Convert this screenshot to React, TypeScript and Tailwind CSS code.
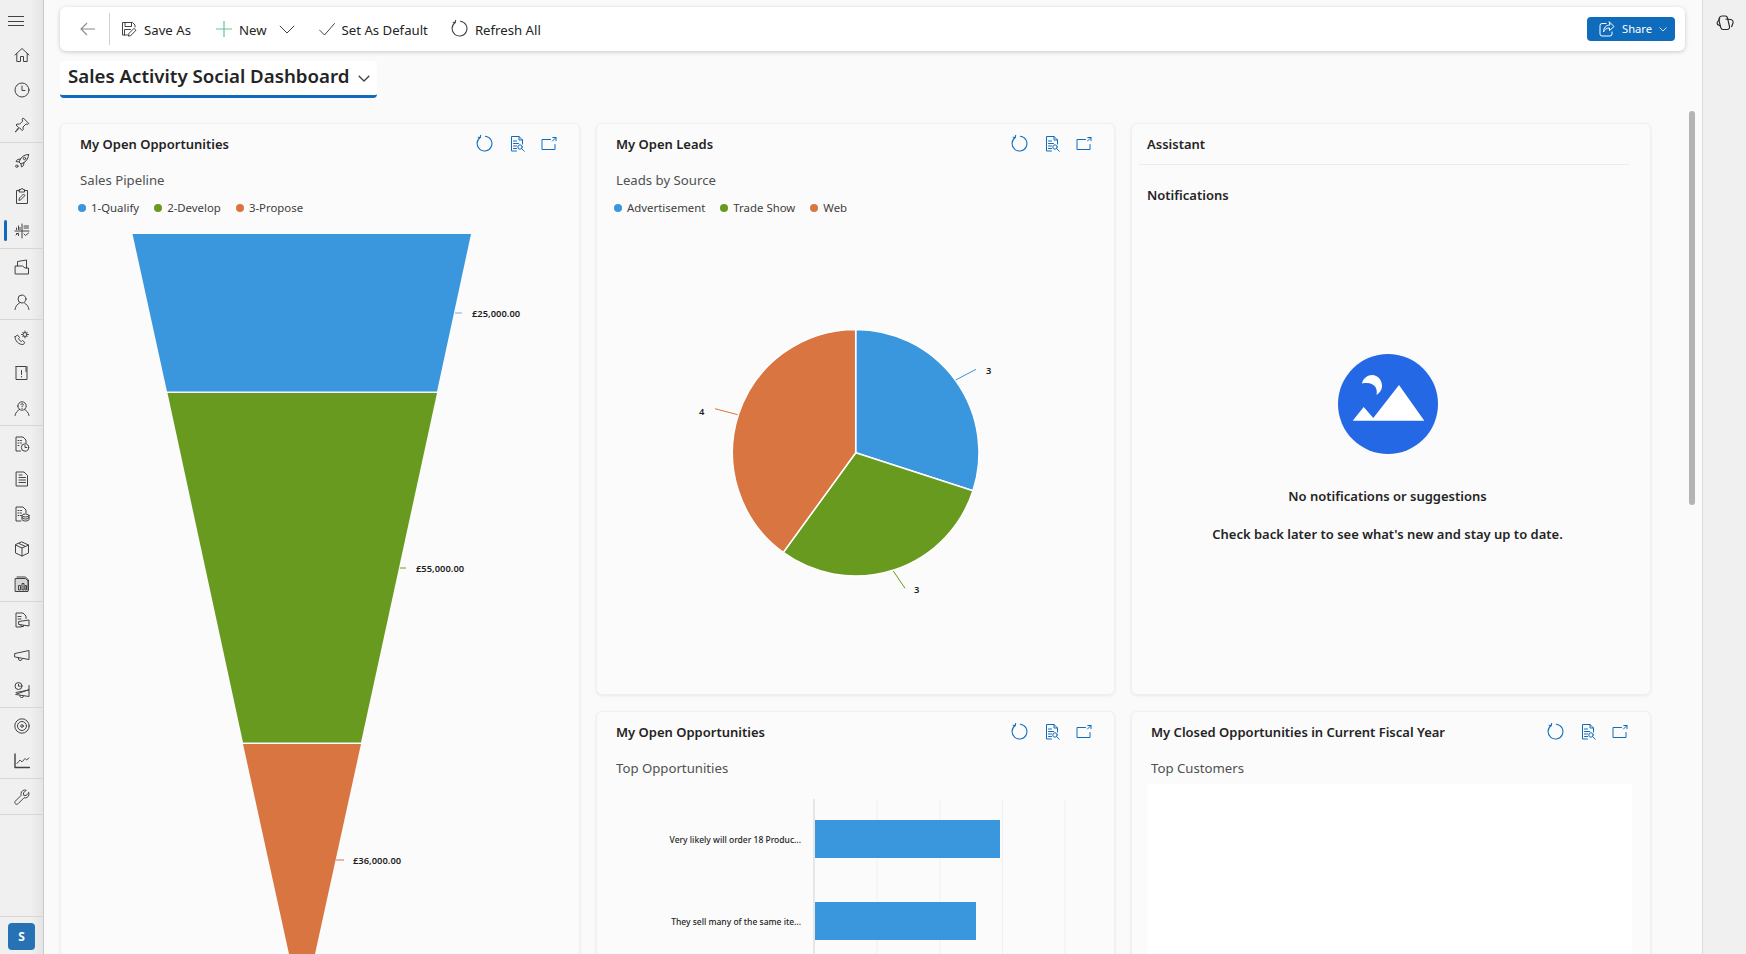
import type { ReactNode } from 'react'

const Ico = ({ s = 16, c = 'text-[#424242]', children }: { s?: number; c?: string; children: ReactNode }) => (
  <svg width={s} height={s} viewBox="0 0 16 16" fill="none" stroke="currentColor" strokeWidth={1} strokeLinecap="round" strokeLinejoin="round" className={`${c} shrink-0`}>
    {children}
  </svg>
)

// sidebar glyphs
const nav: Record<string, ReactNode> = {
  home: <path d="M1 8 8 1.500 15 8M2.800 6.500v8h3.700v-5h3v5h3.700v-8" />,
  clock: <><circle cx="8" cy="8" r="7" /><path d="M8 4v4.500h3" /></>,
  pin: <path d="M9.500 1.200 14.800 6.500l-1.200.8-1.600-.3-3 3 .2 2.600-1 1-2.500-2.800L1.300 15l3.200-4.500L2 8l1-1 2.600.2 3-3-.3-1.600z" />,
  rocket: <><path d="M14.500 1.500c-3.500 0-6 1.500-8 4.500l-1.500 3 2 2 3-1.500c3-2 4.500-4.500 4.500-8z" /><circle cx="10.500" cy="5.500" r="1.200" /><path d="M6.500 6 3.500 6.500 2 8.500l3 .5M10 9.500l-.5 3-2 1.500-.5-3" /><circle cx="2.800" cy="13.200" r="1.200" /></>,
  clipboard: <><path d="M5.500 2.500H2.500v13h11v-13h-3" /><path d="M5.500 1.500h1.500a1 1 0 0 1 2 0h1.500v2.500h-5z" /><path d="m5 12 .5-2 4-4 1.500 1.500-4 4z" /></>,
  dash: <><path d="M8 1v14M1 8h14" /><path d="M2.500 6.500V5M4.500 6.500V3M6 6.500V4.500M10 3h4.500M10 5h4.500M2 12l2-1.800M2.500 10.500h2v2M10 11l1.500 1.500 3-2.500" /></>,
  docs: <><path d="M1.500 7h7l2.500 2h3.500v6h-13z" /><path d="M3.500 7V2.500L12.500 1v8" /></>,
  person: <><circle cx="8" cy="5" r="4" /><path d="M1 15.500c.5-3.500 2.500-5.500 4.500-6.500M15 15.500c-.5-3.500-2.500-5-4.500-6.500" /></>,
  phone: <><path d="M1.500 6.500 3.500 5l2 2.500-1 1.200c.6 1.300 1.600 2.300 2.800 2.800l1.200-1 2.300 2-1.500 2c-4.500.3-8.500-3.500-8.300-8z" /><circle cx="11" cy="4.500" r="2" /><path d="M11 1v1M11 7v1M7.500 4.500h1M13.500 4.500h1M8.700 2.200l.7.700M12.600 6.100l.7.700M13.300 2.200l-.7.700M9.400 6.100l-.7.700" /></>,
  book: <><path d="M2 1.500h9.500M2 1.500v13h11v-13" /><path d="M12 1.500v5" /><path d="M7.500 5.500v4M7.500 11.500v.5" /></>,
  qperson: <><path d="M3.800 6a4.200 4.200 0 1 1 8.400 0 4.200 4.200 0 0 1-8.400 0z" /><path d="M1 15.500c.5-3 2.500-5 4.500-6M15 15.500c-.5-3-2.500-5-4.500-6M6.800 4.500c.3-1.200 2.400-1.200 2.500.2 0 1-1.300 1-1.300 2M8 8.300v.2" /></>,
  doctime: <><path d="M6.500 15H2V1h7l3 3v3" /><path d="M4 4.500h1M6.500 4.500h1M4 7h1M6.500 7h1M4 9.500h1" /><circle cx="11" cy="11.500" r="3.700" /><path d="M11 9.500v2h1.800" /></>,
  doclist: <><path d="M2.500 1h7.500l3.500 3.500V15h-11z" /><path d="M5 6.500h6.500M5 9h6.500M5 11.500h6.500M5 4h3" /></>,
  docdb: <><path d="M7 15H2V1h7l3 3v3" /><path d="M4 4.500h1M6.500 4.500h1M4 7h1M6.500 7h1M4 9.500h1M6.500 9.500h1" /><ellipse cx="11.500" cy="9.500" rx="3.500" ry="1.500" /><path d="M8 9.500v4c0 .8 1.500 1.500 3.500 1.500s3.500-.7 3.500-1.500v-4M8 11.500c0 .8 1.500 1.500 3.500 1.500s3.500-.7 3.500-1.500" /></>,
  box: <><path d="M8 1 14.500 4v8L8 15l-6.500-3V4z" /><path d="M1.500 4 8 7l6.500-3M8 7v8M5 2.500l6.500 3" /></>,
  report: <><path d="M1.500 2.500h10l2.500 2.500v10.500H1.500z" fill="#bdbdbd" fillOpacity={0.5} /><path d="M3 1h8.500l3 3v10" /><path d="M4.500 13.500v-4h2v4zM8 13.500v-6h2v6zM11 13.500v-4h1.500v4z" /></>,
  docmeg: <><path d="M7 15H2V1h7l3 3v2.500" /><path d="M4 4.500h3M4 7h3" /><path d="M5 9.500l10-1.500v6l-10-1.500z" /><path d="M7 13v1.500h2.500V13.500" /></>,
  mega: <><path d="M1 6.500 15 3.500v9L1 10z" /><path d="M4.500 10.500v1.500a1.800 1.800 0 0 0 3.500.3" /></>,
  timemeg: <><circle cx="4.500" cy="4" r="3.500" /><path d="M4.500 2.200v2h1.800" /><path d="M2 10.500 15 8V3.500M15 8v6.500L2 12.500zM6 13.500v.8a1.800 1.800 0 0 0 3.500 0" /></>,
  target: <><circle cx="8" cy="8" r="7.200" /><circle cx="8" cy="8" r="4.500" /><circle cx="8" cy="8" r="1.300" /></>,
  chart: <><path d="M1 1v13.500M1 14.500h14.500" strokeWidth={1.400} /><path d="M3 10.500 6 7l2 2 3-3.500 1.500 1.500L15 5" strokeDasharray="2 .8" /></>,
  wrench: <path d="M14.800 3.800 12 6.500l-2.300-.2-.3-2.300L12.200 1.200c-2.500-.8-5 .8-5.200 3.400 0 .6 0 1.100.3 1.600L1.200 12.300c-.8 1-.3 2.200.5 2.700.8.500 1.800.3 2.400-.3l6-6c2.800.9 5.700-1.500 4.700-4.900z" />,
}

const groups = [
  ['home', 'clock', 'pin'],
  ['rocket', 'clipboard', 'dash'],
  ['docs', 'person'],
  ['phone', 'book', 'qperson'],
  ['doctime', 'doclist', 'docdb', 'box', 'report'],
  ['docmeg', 'mega', 'timemeg'],
  ['target', 'chart'],
  ['wrench'],
]

function Sidebar() {
  return (
    <aside className="w-[44px] h-full shrink-0 flex flex-col bg-gradient-to-r from-[#f0f0f0] from-70% to-[#e4e4e4] border-r border-[#c9c9c9]">
      <div className="h-[37px] pl-[8px] flex flex-col justify-center gap-[3.500px] pt-[5px]">
        <span className="block w-[16px] h-px bg-[#424242]" />
        <span className="block w-[16px] h-px bg-[#424242]" />
        <span className="block w-[16px] h-px bg-[#424242]" />
      </div>
      {groups.map((g, i) => (
        <div key={i} className="border-b border-[#d6d6d6]">
          {g.map(k => (
            <div key={k} className="relative h-[35px] flex items-center pl-[14px]">
              {k === 'dash' && <span className="absolute left-[4px] top-[7px] w-[3px] h-[21px] rounded-sm bg-[#0f6cbd]" />}
              <Ico>{nav[k]}</Ico>
            </div>
          ))}
        </div>
      ))}
      <div className="mt-auto h-[38px] border-t border-[#d6d6d6] pl-[8px] pt-[6px]">
        <div className="w-[27px] h-[27px] rounded bg-[#2672b5] text-white text-[12px] font-bold flex items-center justify-center">S</div>
      </div>
    </aside>
  )
}

const Refresh = ({ c }: { c?: string }) => (
  <Ico s={17} c={c}>
    <path d="M8.800 1.100A7 7 0 1 1 4 2.300" />
    <path d="M4.400 .2 4 2.300 1.900 2.100" />
  </Ico>
)

function ToolBtn({ icon, label, className = '' }: { icon: ReactNode; label?: string; className?: string }) {
  return (
    <div className={`flex items-center gap-[7px] text-[13.200px] text-[#242424] ${className}`}>
      {icon}
      {label && <span className="pt-[3px]">{label}</span>}
    </div>
  )
}

function Toolbar() {
  return (
    <div className="h-[44px] ml-[16px] mr-[17px] mt-[7px] bg-white rounded-md shadow-[0_1px_4px_rgba(0,0,0,0.2)] flex items-center pl-[20px] pr-[10px]">
      <svg width="16" height="14" viewBox="0 0 16 14" fill="none" stroke="#8a8a8a" strokeWidth="1.100" className="shrink-0"><path d="M15 7H1M7 1 1 7l6 6" /></svg>
      <div className="w-px h-[32px] bg-[#d1d1d1] ml-[13px] mr-[11px]" />
      <ToolBtn label="Save As" icon={
        <Ico><path d="M6.500 14H1.500V1.500h10L14 4v2" /><path d="M4 1.500v4h6.500v-4M3.500 14V8.500h6" /><path d="m7.500 14.800.5-2.500 5-5 2 2-5 5z" /></Ico>
      } />
      <ToolBtn className="ml-[25px]" label="New" icon={
        <Ico c="text-[#62c596]"><path d="M8 0v16M0 8h16" strokeWidth={1.200} /></Ico>
      } />
      <svg width="16" height="9" viewBox="0 0 16 9" fill="none" stroke="#424242" className="ml-[12px] shrink-0"><path d="m.8.8 7.200 7.200L15.200.8" /></svg>
      <ToolBtn className="ml-[24px]" label="Set As Default" icon={
        <Ico><path d="M.5 9 5.500 14 15.500 2.500" /></Ico>
      } />
      <ToolBtn className="ml-[23px]" label="Refresh All" icon={<Refresh />} />
      <div className="ml-auto w-[88px] h-[24px] rounded bg-[#0f6cbd] text-white text-[11.200px] flex items-center pl-[12px]">
        <Ico c="text-white"><path d="M7 2.500H3a2 2 0 0 0-2 2V13a2 2 0 0 0 2 2h8a2 2 0 0 0 2-2v-2" /><path d="M10.500 1 15 5.500 10.500 9.500V7C7.500 7 5.500 8.500 4.500 11c0-4 2.500-7 6-7z" /></Ico>
        <span className="ml-[7px] pt-[1px]">Share</span>
        <svg width="8" height="5" viewBox="0 0 8 5" fill="none" stroke="white" className="ml-[7px] opacity-80"><path d="m.5.500 3.500 3.500L7.500.500" /></svg>
      </div>
    </div>
  )
}

function CardIcons() {
  return (
    <div className="flex items-center ml-auto">
      <Refresh c="text-[#0f6cbd]" />
      <span className="ml-[17px]">
        <Ico c="text-[#0f6cbd]"><path d="M6.500 15H1.500V.5h7.500L12.500 4v4" /><path d="M9 .5V4h3.500M3.500 5h3M3.500 7.500h5M3.500 10h3M3.500 12.500h3" /><circle cx="10" cy="11" r="2.200" /><path d="m11.600 12.600 2.600 2.600" /></Ico>
      </span>
      <span className="ml-[15px]">
        <Ico c="text-[#0f6cbd]"><path d="M9.500 3.500H1v10h13V8.500" /><path d="M11.500 5 15 1.500M11.800 1.500H15v3.200" /></Ico>
      </span>
    </div>
  )
}

function Card({ title, sub, className = '', icons = true, titlePad = 'pl-[19px]', children }: { title: string; sub?: string; className?: string; icons?: boolean; titlePad?: string; children?: ReactNode }) {
  return (
    <section className={`bg-[#fbfbfb] border border-[#f0f0f0] rounded-md shadow-[0_1px_3px_rgba(0,0,0,0.07)] overflow-hidden ${className}`}>
      <div className={`h-[39px] flex items-center pr-[22px] ${titlePad}`}>
        <h3 className="pt-[2px] text-[13px] font-semibold text-[#242424]">{title}</h3>
        {icons && <CardIcons />}
      </div>
      {sub && <div className="h-[32px] pl-[19px] pt-[3px] flex items-center text-[13.200px] text-[#505050]">{sub}</div>}
      {children}
    </section>
  )
}

function Legend({ items }: { items: [string, string][] }) {
  return (
    <div className="h-[26px] pl-[17px] flex items-center gap-[15px] text-[11.400px] text-[#404040]">
      {items.map(([label, color]) => (
        <span key={label} className="flex items-center gap-[5px]">
          <span className="block w-[8px] h-[8px] rounded-full" style={{ background: color }} />
          {label}
        </span>
      ))}
    </div>
  )
}

const BLUE = '#3a96dd'
const GREEN = '#689a20'
const ORANGE = '#d87540'

function ChartLabel({ x, y, children }: { x: number; y: number; children: ReactNode }) {
  return <text x={x} y={y} dominantBaseline="central" className="text-[9.400px] font-semibold fill-[#1f1f1f]">{children}</text>
}

// viewBoxes below use page coordinates so the numbers read off the reference directly
function Funnel() {
  return (
    <svg width="518" height="720" viewBox="61 234 518 720" className="block mt-[13px]">
      <polygon points="132.500,234 471,234 437,391.500 167,391.500" fill={BLUE} />
      <polygon points="167.500,393 437,393 361,742.500 243,742.500" fill={GREEN} />
      <polygon points="243,744 361,744 315,954 289,954" fill={ORANGE} />
      <line x1="455" y1="313" x2="462" y2="313" stroke={BLUE} strokeOpacity={0.7} />
      <line x1="400" y1="568" x2="406" y2="568" stroke={GREEN} />
      <line x1="336" y1="860" x2="344" y2="860" stroke={ORANGE} />
      <ChartLabel x={472} y={313}>£25,000.00</ChartLabel>
      <ChartLabel x={416} y={568}>£55,000.00</ChartLabel>
      <ChartLabel x={353} y={860}>£36,000.00</ChartLabel>
    </svg>
  )
}

function Pie() {
  const cx = 855.7, cy = 452.7, r = 123.3
  const pt = (deg: number) => {
    const a = (deg - 90) * Math.PI / 180
    return `${cx + r * Math.cos(a)} ${cy + r * Math.sin(a)}`
  }
  const slice = (from: number, to: number) => `M${cx} ${cy}L${pt(from)}A${r} ${r} 0 0 1 ${pt(to)}Z`
  return (
    <svg width="517" height="440" viewBox="597 234 517 440" className="block mt-[13px]">
      <path d={slice(0, 108)} fill={BLUE} stroke="#fff" strokeWidth="1.500" />
      <path d={slice(108, 216)} fill={GREEN} stroke="#fff" strokeWidth="1.500" />
      <path d={slice(216, 360)} fill={ORANGE} stroke="#fff" strokeWidth="1.500" />
      <line x1="955.700" y1="380" x2="976" y2="369.300" stroke={BLUE} />
      <line x1="893.300" y1="571" x2="905" y2="588.300" stroke={GREEN} />
      <line x1="737.700" y1="414.700" x2="715" y2="408.700" stroke={ORANGE} />
      <ChartLabel x={986} y={370.500}>3</ChartLabel>
      <ChartLabel x={914} y={589}>3</ChartLabel>
      <ChartLabel x={699} y={411}>4</ChartLabel>
    </svg>
  )
}

function Bars() {
  const grid = [877, 940, 1002.5, 1065]
  const rows = [
    { label: 'Very likely will order 18 Produc...', y: 820, end: 1000 },
    { label: 'They sell many of the same ite...', y: 902, end: 976 },
  ]
  return (
    <svg width="517" height="155" viewBox="597 799 517 155" className="block mt-[16px]">
      {grid.map(x => <line key={x} x1={x} y1="799" x2={x} y2="954" stroke="#f0f0f0" />)}
      <line x1="814" y1="799" x2="814" y2="954" stroke="#e0e0e0" strokeWidth="1.500" />
      {rows.map(b => (
        <g key={b.y}>
          <rect x="815" y={b.y} width={b.end - 815} height="38" fill={BLUE} />
          <text x="801" y={b.y + 19} textAnchor="end" dominantBaseline="central" className="text-[8.500px] font-medium fill-[#242424]">{b.label}</text>
        </g>
      ))}
    </svg>
  )
}

export default function App() {
  return (
    <div className="w-screen h-screen overflow-hidden flex bg-[#fafafa] text-[#242424] font-['Noto_Sans',sans-serif]">
      <Sidebar />
      <main className="relative flex-1 min-w-0 h-full overflow-hidden">
        <Toolbar />
        <div className="ml-[16px] mt-[10px] w-[317px] h-[37px] bg-white rounded-sm border-b-[3px] border-[#0f6cbd] flex items-center pl-[8px] pb-[4px]">
          <h1 className="text-[18.700px] font-semibold text-[#242424] whitespace-nowrap">Sales Activity Social Dashboard</h1>
          <svg width="12" height="7" viewBox="0 0 12 7" fill="none" stroke="#424242" strokeWidth="1.300" className="ml-[9px] mt-[4px]"><path d="m.7.700 5.300 5.300L11.300.700" /></svg>
        </div>
        <div className="ml-[16px] mt-[25px] w-[1591px] grid grid-cols-[520px_519px_520px] grid-rows-[572px_400px] gap-x-[16px] gap-y-[16px]">
          <Card title="My Open Opportunities" sub="Sales Pipeline" className="row-span-2">
            <Legend items={[['1-Qualify', BLUE], ['2-Develop', GREEN], ['3-Propose', ORANGE]]} />
            <Funnel />
          </Card>
          <Card title="My Open Leads" sub="Leads by Source">
            <Legend items={[['Advertisement', BLUE], ['Trade Show', GREEN], ['Web', ORANGE]]} />
            <Pie />
          </Card>
          <Card title="Assistant" icons={false} titlePad="pl-[15px]" className="flex flex-col">
            <div className="h-px mt-[1px] mx-[7px] w-[490px] bg-[#ececec]" />
            <div className="pl-[15px] mt-[21px] text-[13px] font-semibold">Notifications</div>
            <div className="mt-[148px] pr-[7px] flex flex-col items-center text-[13px] font-semibold leading-[20px]">
              <svg width="100" height="100" viewBox="0 0 100 100">
                <circle cx="50" cy="50" r="50" fill="#2468e6" />
                <polygon points="14.700,66.700 25.700,53 35.300,64 61,31 86.300,66.700" fill="white" />
                <path d="M24 29.500C25 24 30 21 34 21C40 21 44 26 44 32C44 36 41 39.500 38.500 41C40 35 37 27 24 29.500Z" fill="white" />
              </svg>
              <div className="mt-[32px]">No notifications or suggestions</div>
              <div className="mt-[18px]">Check back later to see what's new and stay up to date.</div>
            </div>
          </Card>
          <Card title="My Open Opportunities" sub="Top Opportunities">
            <Bars />
          </Card>
          <Card title="My Closed Opportunities in Current Fiscal Year" sub="Top Customers">
            <div className="ml-[15px] mr-[18px] mt-[1px] h-[330px] bg-white" />
          </Card>
        </div>
        <div className="absolute right-[7px] top-[111px] w-[6px] h-[394px] rounded-full bg-[#b4b4b4]" />
      </main>
      <aside className="w-[44px] h-full shrink-0 bg-[#f0f0f0] border-l border-[#dcdcdc] flex justify-center pt-[15px]">
        <svg width="18" height="16" viewBox="0 0 18 16" fill="none" stroke="#242424" strokeWidth="1.100" strokeLinejoin="round">
          <path d="M6 1h3.500c1.200 0 1.800 1 2 2l2 8.500c.3 1.500-.5 3-2.300 3H7c-1.200 0-2-1-2.300-2L3 5.500C2.500 3 4 1 6 1z" />
          <path d="M4 3.500 1.500 7c-.8 1.300-.3 2.500 1 3l2 1M9.500 4l5 .5c2 .3 3 1.800 2.500 3.500l-1.500 4" />
        </svg>
      </aside>
    </div>
  )
}
